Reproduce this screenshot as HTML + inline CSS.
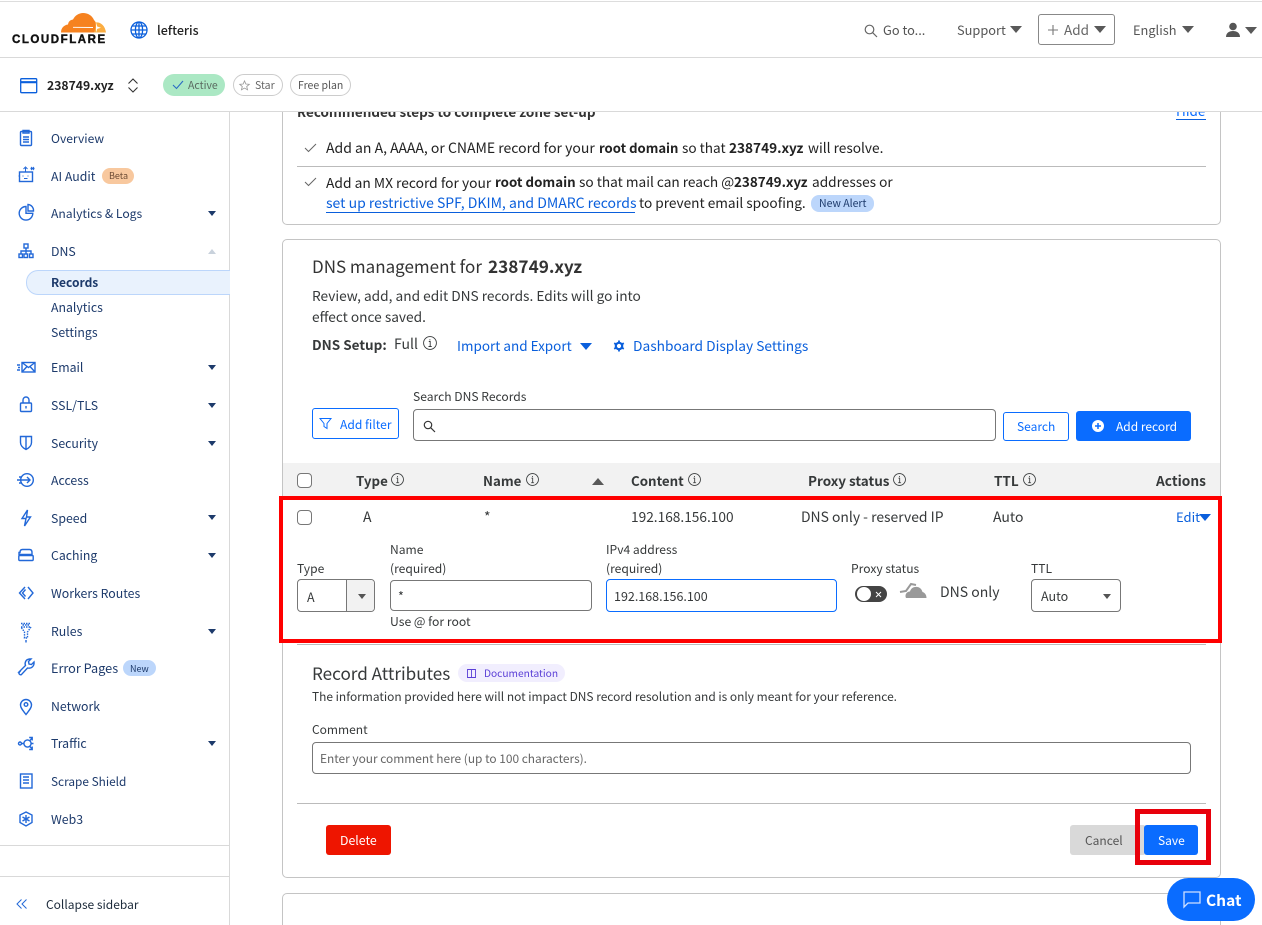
<!DOCTYPE html>
<html lang="en">
<head>
<meta charset="utf-8">
<title>DNS Records</title>
<style>
html,body{margin:0;padding:0;width:1262px;height:925px;overflow:hidden;background:#fff}
body{position:relative;font-family:"Noto Sans CJK JP","Liberation Sans",sans-serif;font-size:13px;color:#36393a}
.t{position:absolute;white-space:nowrap;line-height:20px;height:20px}
.b{position:absolute;box-sizing:border-box}
svg{position:absolute;overflow:visible}
b{font-weight:700}
.n{color:#1d3a6b;font-size:12.300px;left:51px}
.a{color:#0a5fdc}
.ar{position:absolute;width:0;height:0;border-left:4.5px solid transparent;border-right:4.5px solid transparent;border-top:5px solid #1d3a6b;left:208px}
.i{fill:none;stroke:#2268d8;stroke-width:1.4}
.dk{position:absolute;width:0;height:0;border-left:6px solid transparent;border-right:6px solid transparent;border-top:7px solid #595959}
.inf{fill:none;stroke:#36393a;stroke-width:.9}
</style>
</head>
<body>
<!-- top -->
<div class="b" style="left:0;top:1px;width:1262px;height:1px;background:#ddd"></div>
<div class="b" style="left:0;top:57px;width:1262px;height:1px;background:#d9d9d9"></div>

<svg style="left:0;top:0" width="120" height="50" viewBox="0 0 120 50">
<path d="M61 32.500C61 28 64 25 68 24.500C68.500 21.500 70 20 73 19.500C75 15.500 79 13 83 13C88 13 92 15.500 94 20C96 22 97 25 97 27L96 32.500Z" fill="#f6821f"/>
<path d="M94 32.500C95.500 28.500 96 25 95 22.500C100 21.500 105 25 106 32.500Z" fill="#fbad41"/>
<path d="M73 27.300l20 .2" stroke="#fff" stroke-width=".9"/>
<path d="M96 22.500l1.200 4 3.800 1.200-3.800 1.200-1.200 3.600" fill="#fff"/>
</svg>
<div class="t" style="left:12px;top:30px;font:700 11.500px/20px 'Liberation Sans',sans-serif;letter-spacing:1.550px;color:#111;-webkit-text-stroke:.4px #111">CLOUDFLARE</div>
<svg style="left:130px;top:21px" width="18" height="18" viewBox="0 0 18 18" fill="none" stroke="#0a5fdc" stroke-width="1.300">
<circle cx="9" cy="9" r="8"/><ellipse cx="9" cy="9" rx="3.600" ry="8"/><path d="M1 9h16M2 5h14M2 13h14M9 1v16"/>
</svg>
<div class="t" style="left:157px;top:20px;font-size:12.500px;font-weight:500;color:#222">lefteris</div>

<svg style="left:864px;top:24px" width="14" height="14" viewBox="0 0 14 14" fill="none" stroke="#666" stroke-width="1.200"><circle cx="5.500" cy="5.500" r="4.300"/><path d="M8.700 8.700l4.300 4.300"/></svg>
<div class="t" style="left:883px;top:20px;font-size:12.800px;color:#555">Go to...</div>
<div class="t" style="left:957px;top:20px;font-size:12.800px;color:#555">Support</div>
<div class="dk" style="left:1010px;top:26px"></div>
<div class="b" style="left:1038px;top:14px;width:77px;height:31px;border:1px solid #888;border-radius:3px"></div>
<svg style="left:1047px;top:24px" width="12" height="12" viewBox="0 0 12 12" stroke="#777" stroke-width="1.100"><path d="M6 1v10M1 6h10"/></svg>
<div class="t" style="left:1064px;top:19px;font-size:13.500px;color:#666">Add</div>
<div class="dk" style="left:1094px;top:26px"></div>
<div class="t" style="left:1133px;top:20px;font-size:12.800px;color:#555">English</div>
<div class="dk" style="left:1182px;top:26px"></div>
<svg style="left:1225px;top:22px" width="16" height="16" viewBox="0 0 16 16" fill="#555"><circle cx="8" cy="4.500" r="3.800"/><path d="M1 15c0-4 3-6 7-6s7 2 7 6z"/></svg>
<div class="dk" style="left:1245px;top:27px"></div>

<!-- content cards (under zone bar) -->
<div class="b" style="left:282px;top:90px;width:939px;height:135px;border:1px solid #c4c4c4;border-radius:5px"></div>
<div class="t" style="left:297px;top:101px;font-size:13.460px;font-weight:700;color:#333">Recommended steps to complete zone set-up</div>
<div class="t" style="left:1176px;top:100px;font-size:13.500px;color:#0a6cff">Hide</div>
<div class="b" style="left:1176px;top:119px;width:30px;height:1px;background:#0a5fdc"></div>

<!-- zone bar -->
<div class="b" style="left:0;top:58px;width:1262px;height:53px;background:#fff"></div>
<div class="b" style="left:0;top:111px;width:1262px;height:1px;background:#d9d9d9"></div>
<svg style="left:20px;top:78px" width="18" height="16" viewBox="0 0 18 16" fill="none" stroke="#0a5fdc" stroke-width="1.300"><rect x=".7" y=".7" width="16" height="14" rx="1"/><path d="M.7 4.200h16" stroke-width="2.200"/></svg>
<div class="t" style="left:47px;top:75px;font-size:12.200px;font-weight:700;color:#222">238749.xyz</div>
<svg style="left:127px;top:78px" width="12" height="15" viewBox="0 0 12 15" fill="none" stroke="#333" stroke-width="1.100"><path d="M1.500 5.500L6 1l4.500 4.500M1.500 9.500L6 14l4.500-4.500"/></svg>
<div class="b" style="left:163px;top:74px;width:62px;height:22px;background:#abe8c4;border-radius:11px"></div>
<svg style="left:172px;top:80px" width="12" height="10" viewBox="0 0 12 10" fill="none" stroke="#2a6bc4" stroke-width="1.100"><path d="M1 5l3.500 3.500L11 1"/></svg>
<div class="t" style="left:188px;top:76px;font-size:10.500px;color:#5a6a60">Active</div>
<div class="b" style="left:233px;top:74px;width:50px;height:22px;border:1px solid #ccc;border-radius:11px"></div>
<svg style="left:239px;top:80px" width="11" height="11" viewBox="0 0 12 12" fill="none" stroke="#999" stroke-width=".9"><path d="M6 1l1.500 3.400 3.700.3-2.800 2.400.9 3.600L6 8.800l-3.300 1.900.9-3.600L.8 4.700l3.700-.3z"/></svg>
<div class="t" style="left:255px;top:76px;font-size:10.500px;color:#666">Star</div>
<div class="b" style="left:290px;top:74px;width:61px;height:22px;border:1px solid #ccc;border-radius:11px"></div>
<div class="t" style="left:298px;top:76px;font-size:10.500px;color:#555">Free plan</div>

<!-- sidebar -->
<div class="b" style="left:229px;top:112px;width:1px;height:813px;background:#d9d9d9"></div>
<div class="b" style="left:26px;top:270px;width:204px;height:25px;background:#e9f2fd;border:1px solid #bcd6fb;border-right:0;border-radius:12px 0 0 12px"></div>
<div class="b" style="left:0;top:845px;width:229px;height:1px;background:#d9d9d9"></div>
<div class="b" style="left:0;top:876px;width:229px;height:1px;background:#d9d9d9"></div>

<div class="t n" style="top:129px;font-size:12.100px">Overview</div>
<div class="t n" style="top:166px">AI Audit</div>
<div class="b" style="left:102px;top:168px;width:32px;height:16px;background:#f8c89e;border-radius:8px"></div>
<div class="t" style="left:109px;top:166px;font-size:9px;color:#6b4a33">Beta</div>
<div class="t n" style="top:204px;font-size:12.150px">Analytics &amp; Logs</div>
<div class="t n" style="top:241px">DNS</div>
<div class="t n" style="top:273px;font-weight:700;color:#1d3a6b;font-size:12px">Records</div>
<div class="t n" style="top:297px">Analytics</div>
<div class="t n" style="top:322px">Settings</div>
<div class="t n" style="top:357px">Email</div>
<div class="t n" style="top:395px">SSL/TLS</div>
<div class="t n" style="top:433px">Security</div>
<div class="t n" style="top:470px">Access</div>
<div class="t n" style="top:508px">Speed</div>
<div class="t n" style="top:545px">Caching</div>
<div class="t n" style="top:583px">Workers Routes</div>
<div class="t n" style="top:621px">Rules</div>
<div class="t n" style="top:658px;font-size:12.700px">Error Pages</div>
<div class="b" style="left:123px;top:660px;width:33px;height:16px;background:#bcd6fb;border-radius:8px"></div>
<div class="t" style="left:130px;top:659px;font-size:9px;color:#1d3a6b">New</div>
<div class="t n" style="top:696px">Network</div>
<div class="t n" style="top:733px">Traffic</div>
<div class="t n" style="top:772px;font-size:11.850px">Scrape Shield</div>
<div class="t n" style="top:809px">Web3</div>
<div class="t" style="left:46px;top:895px;font-size:12px;color:#1c2a3a">Collapse sidebar</div>

<div class="ar" style="top:211px"></div>
<div class="ar" style="top:249px;border-top:0;border-bottom:5px solid #c9d2dc"></div>
<div class="ar" style="top:365px"></div>
<div class="ar" style="top:403px"></div>
<div class="ar" style="top:441px"></div>
<div class="ar" style="top:515px"></div>
<div class="ar" style="top:553px"></div>
<div class="ar" style="top:629px"></div>
<div class="ar" style="top:741px"></div>

<!-- sidebar icons -->
<svg style="left:0;top:0" width="60" height="925" viewBox="0 0 60 925">
<g class="i">
<!-- overview -->
<rect x="20.500" y="131.500" width="11" height="14" rx="1"/><path d="M23 130.500h6v2.500h-6zM23 137h6M23 139.500h6M23 142h6"/>
<!-- ai audit -->
<rect x="19.500" y="172" width="13" height="9.500"/><path d="M25.500 172v-4M23.500 169l2-2 2 2M23 175.500v1M28 175.500v1M24 178.500h3.500M19.500 176h-1M31 167l3 3M34 167l-3 3M30.500 168.500h4" stroke-width="1"/>
<!-- analytics -->
<path d="M26 206.500a6.800 6.800 0 1 0 6.800 6.800h-6.800z"/><path d="M28 204.500a6 6 0 0 1 5.500 6.500H28z"/>
<!-- dns -->
<rect x="24" y="244" width="4" height="4"/><rect x="19" y="254" width="3.500" height="3.500"/><rect x="24" y="254" width="3.500" height="3.500"/><rect x="29.500" y="254" width="3.500" height="3.500"/><path d="M26 248v6M21 254v-3h10v3"/>
<!-- email -->
<rect x="22" y="362.500" width="13" height="9.500"/><path d="M22 362.500l6.500 5 6.500-5M22 372l5-5.500M35 372l-5-5.500M17 365h3M18 367.500h2M17 370h3"/>
<!-- ssl -->
<rect x="20.500" y="403" width="11" height="8.500" rx="1"/><path d="M23 403v-3a3 3 0 0 1 6 0v3M26 406v2.500"/>
<!-- security -->
<path d="M20.500 436.500h11v6c0 3-2.500 5.500-5.500 7-3-1.500-5.500-4-5.500-7zM26 436.500v13"/>
<!-- access -->
<circle cx="27" cy="480" r="6.300"/><path d="M17 480h13M27 477l3 3-3 3M19 477h3M19 483h3"/>
<!-- speed -->
<path d="M27.500 510l-5.500 8.500h4l-1.500 7.500 6-9h-4z"/>
<!-- caching -->
<path d="M20 552.500c0-2 1-3 2.500-3h7c1.500 0 2.500 1 2.500 3v2H19v-2z"/><rect x="18.800" y="555.500" width="14.400" height="5" rx="1"/>
<!-- workers -->
<path d="M25 587l-5.500 6 5.500 6M28 587l5 6-5 6M25.500 589.500l-3 3.500 3 3.500"/>
<!-- rules -->
<path d="M21 627h10l-3.500 5v6h-3v-6zM21 623.500h10M22.500 625h7" stroke-dasharray="1.500 1"/><path d="M26 640v2.500"/>
<!-- error -->
<path d="M19 672l6.500-6.500c-1-2.500 0-6 4-6.500l1.500 0-2.500 2.500.5 2.500 2.500.5 2.500-2.500c.5 4-2.500 7-6.500 6l-6 6.500c-1.500 1-3.500-1-2-2.500z"/>
<!-- network -->
<path d="M26 714.500c-3-4-5.500-6.500-5.500-9.500a5.500 5.500 0 0 1 11 0c0 3-2.500 5.500-5.500 9.500z"/><circle cx="26" cy="704.500" r="1.800"/>
<!-- traffic -->
<circle cx="27.500" cy="743.500" r="3.600"/><circle cx="20" cy="743.500" r="1.500"/><path d="M21.500 743.500H24M30 740.500l2-2.500M29.200 737.500h3v3M30 746.500l2 2.500M29.200 749.500h3v-3M31 743.500h2.500"/>
<!-- scrape -->
<rect x="20.500" y="774" width="11.500" height="14"/><path d="M23 777h6M23 780h6M23 783h6"/>
<!-- web3 -->
<path d="M26 812l6 3v7.500l-6 3.500-6-3.500V815z"/><path d="M26 815v8M22.500 817l7 4M29.500 817l-7 4"/>
<!-- collapse -->
<path d="M21.500 899.500l-4.500 4.500 4.500 4.500M26.500 899.500L22 904l4.500 4.500" stroke-width="1"/>
</g>
</svg>

<!-- first card rows -->
<svg style="left:304px;top:143px" width="14" height="10" viewBox="0 0 14 10" fill="none" stroke="#666" stroke-width="1"><path d="M1 5l3.500 3.500L12 1"/></svg>
<div class="t" style="left:326px;top:138px;font-size:14px;color:#222">Add an A, AAAA, or CNAME record for your</div>
<div class="t" style="left:599px;top:138px;font-size:13.100px;font-weight:700;color:#222">root domain</div>
<div class="t" style="left:682px;top:137px;font-size:13.600px;color:#222">so that</div>
<div class="t" style="left:729px;top:137px;font-size:13.600px;font-weight:700;color:#222">238749.xyz</div>
<div class="t" style="left:808px;top:137px;font-size:13.700px;color:#222">will resolve.</div>
<div class="b" style="left:297px;top:166px;width:909px;height:1px;background:#bbb"></div>
<svg style="left:304px;top:177px" width="14" height="10" viewBox="0 0 14 10" fill="none" stroke="#666" stroke-width="1"><path d="M1 5l3.500 3.500L12 1"/></svg>
<div class="t" style="left:326px;top:172px;font-size:13.800px;color:#222">Add an MX record for your</div>
<div class="t" style="left:495px;top:172px;font-size:13.300px;font-weight:700;color:#222">root domain</div>
<div class="t" style="left:579px;top:171px;font-size:13.660px;color:#222">so that mail can reach @</div>
<div class="t" style="left:734px;top:171px;font-size:13.450px;font-weight:700;color:#222">238749.xyz</div>
<div class="t" style="left:812px;top:171px;font-size:13.660px;color:#222">addresses or</div>
<div class="t a" style="left:326px;top:193px;font-size:14px">set up restrictive SPF, DKIM, and DMARC records</div>
<div class="t" style="left:639px;top:192px;font-size:13.670px;color:#222">to prevent email spoofing.</div>
<div class="b" style="left:326px;top:212px;width:309px;height:1px;background:#0a5fdc"></div>
<div class="b" style="left:811px;top:195px;width:63px;height:17px;background:#bcd6fb;border-radius:8px"></div>
<div class="t" style="left:819px;top:194px;font-size:10.500px;color:#1d3a6b">New Alert</div>

<!-- main card -->
<div class="b" style="left:282px;top:239px;width:939px;height:639px;border:1px solid #c4c4c4;border-radius:5px"></div>
<div class="t" style="left:312px;top:256px;font-size:17px;color:#333">DNS management for</div>
<div class="t" style="left:488px;top:256px;font-size:17.200px;font-weight:700;color:#333">238749.xyz</div>
<div class="t" style="left:312px;top:285px;font-size:13.700px;color:#36393a">Review, add, and edit DNS records. Edits will go into</div>
<div class="t" style="left:312px;top:306px;font-size:13.700px;color:#36393a">effect once saved.</div>
<div class="t" style="left:312px;top:334px;font-size:13.500px;font-weight:700;color:#36393a">DNS Setup:</div>
<div class="t" style="left:394px;top:334px;font-size:14px;color:#36393a">Full</div>
<svg class="inf" style="left:423px;top:336px" width="14" height="14" viewBox="0 0 14 14"><circle cx="7" cy="7" r="6.400"/><path d="M5.800 5.500H7.200V10.500M5.500 10.500h3.200M6.900 3.200v1.200"/></svg>
<div class="t a" style="left:457px;top:335px;font-size:13.500px">Import and Export</div>
<div class="dk" style="left:580px;top:343px;border-top-color:#0a5fdc"></div>
<svg style="left:613px;top:340px" width="12" height="12" viewBox="0 0 12 12"><circle cx="6" cy="6" r="3.200" fill="none" stroke="#0a5fdc" stroke-width="2.200"/><path d="M6 .5v2M6 9.500v2M1.200 3.200l1.700 1M9.100 7.800l1.700 1M1.200 8.800l1.700-1M9.100 4.200l1.700-1" stroke="#0a5fdc" stroke-width="1.800"/></svg>
<div class="t a" style="left:633px;top:335px;font-size:13.750px">Dashboard Display Settings</div>

<div class="t" style="left:413px;top:387px;font-size:12.100px;color:#36393a">Search DNS Records</div>
<div class="b" style="left:312px;top:408px;width:87px;height:31px;border:1px solid #0a6cff;border-radius:3px"></div>
<svg style="left:319px;top:417px" width="13" height="13" viewBox="0 0 13 13" fill="none" stroke="#0a6cff" stroke-width="1"><path d="M1 1.500h11L8 6.500v5l-3-2V6.500z"/></svg>
<div class="t" style="left:340px;top:415px;font-size:12.100px;color:#0a6cff">Add filter</div>
<div class="b" style="left:413px;top:409px;width:583px;height:32px;border:1px solid #777;border-radius:4px"></div>
<svg style="left:423px;top:420px" width="13" height="13" viewBox="0 0 13 13" fill="none" stroke="#333" stroke-width="1.200"><circle cx="5" cy="5" r="3.700"/><path d="M7.800 7.800L12 12"/></svg>
<div class="b" style="left:1003px;top:412px;width:66px;height:29px;border:1px solid #0a6cff;border-radius:3px"></div>
<div class="t" style="left:1017px;top:417px;font-size:12px;color:#0a6cff">Search</div>
<div class="b" style="left:1076px;top:411px;width:115px;height:30px;background:#0a6cff;border-radius:3px"></div>
<svg style="left:1092px;top:420px" width="12" height="12" viewBox="0 0 12 12"><circle cx="6" cy="6" r="6" fill="#fff"/><path d="M6 3v6M3 6h6" stroke="#0a6cff" stroke-width="1.500"/></svg>
<div class="t" style="left:1116px;top:417px;font-size:12px;color:#fff">Add record</div>

<!-- table -->
<div class="b" style="left:283px;top:463px;width:937px;height:34px;background:#f2f2f2"></div>
<div class="b" style="left:297px;top:473px;width:15px;height:15px;border:1px solid #777;border-radius:4px;background:#fff"></div>
<div class="t" style="left:356px;top:471px;font-size:13.300px;font-weight:700;color:#36393a">Type</div>
<svg class="inf" style="left:391px;top:473px" width="13" height="13" viewBox="0 0 14 14"><circle cx="7" cy="7" r="6.400"/><path d="M5.800 5.500H7.200V10.500M5.500 10.500h3.200M6.900 3.200v1.200"/></svg>
<div class="t" style="left:483px;top:471px;font-size:13.300px;font-weight:700;color:#36393a">Name</div>
<svg class="inf" style="left:526px;top:473px" width="13" height="13" viewBox="0 0 14 14"><circle cx="7" cy="7" r="6.400"/><path d="M5.800 5.500H7.200V10.500M5.500 10.500h3.200M6.900 3.200v1.200"/></svg>
<div class="b" style="left:592px;top:478px;width:0;height:0;border-left:6px solid transparent;border-right:6px solid transparent;border-bottom:7px solid #595959"></div>
<div class="t" style="left:631px;top:471px;font-size:13.300px;font-weight:700;color:#36393a">Content</div>
<svg class="inf" style="left:688px;top:473px" width="13" height="13" viewBox="0 0 14 14"><circle cx="7" cy="7" r="6.400"/><path d="M5.800 5.500H7.200V10.500M5.500 10.500h3.200M6.900 3.200v1.200"/></svg>
<div class="t" style="left:808px;top:470px;font-size:13.500px;font-weight:700;color:#36393a">Proxy status</div>
<svg class="inf" style="left:893px;top:473px" width="13" height="13" viewBox="0 0 14 14"><circle cx="7" cy="7" r="6.400"/><path d="M5.800 5.500H7.200V10.500M5.500 10.500h3.200M6.900 3.200v1.200"/></svg>
<div class="t" style="left:994px;top:470px;font-size:13.500px;font-weight:700;color:#36393a">TTL</div>
<svg class="inf" style="left:1023px;top:473px" width="13" height="13" viewBox="0 0 14 14"><circle cx="7" cy="7" r="6.400"/><path d="M5.800 5.500H7.200V10.500M5.500 10.500h3.200M6.900 3.200v1.200"/></svg>
<div class="t" style="left:1156px;top:470px;font-size:13.700px;font-weight:700;color:#36393a">Actions</div>

<div class="b" style="left:297px;top:510px;width:15px;height:15px;border:1px solid #777;border-radius:4px"></div>
<div class="t" style="left:363px;top:507px;font-size:14px">A</div>
<div class="t" style="left:484px;top:507px;font-size:14px">*</div>
<div class="t" style="left:631px;top:506px;font-size:13.700px">192.168.156.100</div>
<div class="t" style="left:801px;top:507px;font-size:13.900px">DNS only - reserved IP</div>
<div class="t" style="left:993px;top:507px;font-size:14px">Auto</div>
<div class="t" style="left:1176px;top:507px;font-size:13px;color:#0a5fdc">Edit</div>
<div class="dk" style="left:1199px;top:514px;border-top-color:#0a5fdc"></div>

<div class="t" style="left:297px;top:559px;font-size:12.100px">Type</div>
<div class="t" style="left:390px;top:540px;font-size:12.100px">Name</div>
<div class="t" style="left:390px;top:559px;font-size:12.100px">(required)</div>
<div class="t" style="left:606px;top:540px;font-size:12.100px">IPv4 address</div>
<div class="t" style="left:606px;top:559px;font-size:12.100px">(required)</div>
<div class="t" style="left:851px;top:559px;font-size:12.100px">Proxy status</div>
<div class="t" style="left:1031px;top:559px;font-size:12.100px">TTL</div>

<div class="b" style="left:297px;top:579px;width:78px;height:33px;border:1px solid #777;border-radius:4px;overflow:hidden"><div class="b" style="left:48px;top:0;width:30px;height:33px;background:#f2f2f2;border-left:1px solid #777"></div></div>
<div class="t" style="left:307px;top:587px;font-size:12.500px">A</div>
<div class="b" style="left:358px;top:594px;width:0;height:0;border-left:4px solid transparent;border-right:4px solid transparent;border-top:5px solid #555"></div>
<div class="b" style="left:390px;top:580px;width:202px;height:31px;border:1px solid #777;border-radius:4px"></div>
<div class="t" style="left:398px;top:586px;font-size:12.500px">*</div>
<div class="t" style="left:390px;top:611px;font-size:12.200px">Use @ for root</div>
<div class="b" style="left:606px;top:579px;width:231px;height:33px;border:1px solid #0a6cff;border-radius:4px"></div>
<div class="t" style="left:614px;top:586px;font-size:12.500px">192.168.156.100</div>

<div class="b" style="left:855px;top:586px;width:32px;height:16px;background:#444;border-radius:8px"></div>
<div class="b" style="left:857px;top:587px;width:14px;height:14px;background:#fff;border-radius:7px"></div>
<svg style="left:875px;top:591px" width="7" height="7" viewBox="0 0 7 7" stroke="#fff" stroke-width="1"><path d="M1 1l5 5M6 1L1 6"/></svg>
<svg style="left:899px;top:581px" width="28" height="18" viewBox="0 0 28 18"><path d="M7 17c-1.500-3 .5-6.500 4-6.500 1-3.500 4-5 7.500-4.500 3 .5 4.500 3 5 5 2 .5 4 2.500 4 6z" fill="#999"/><path d="M1 11l6-1 5-7 5 1" fill="none" stroke="#999" stroke-width="2"/></svg>
<div class="t" style="left:940px;top:582px;font-size:14px">DNS only</div>

<div class="b" style="left:1031px;top:579px;width:90px;height:33px;border:1px solid #777;border-radius:4px"></div>
<div class="t" style="left:1041px;top:586px;font-size:12.500px">Auto</div>
<div class="b" style="left:1103px;top:594px;width:0;height:0;border-left:4px solid transparent;border-right:4px solid transparent;border-top:5px solid #555"></div>

<div class="b" style="left:297px;top:644px;width:909px;height:1px;background:#bbb"></div>

<div class="t" style="left:312px;top:663px;font-size:17.100px;color:#36393a">Record Attributes</div>
<div class="b" style="left:458px;top:664px;width:107px;height:18px;background:#f1eefe;border-radius:9px"></div>
<svg style="left:467px;top:669px" width="9" height="9" viewBox="0 0 9 9" fill="none" stroke="#5a3fd6" stroke-width=".9"><path d="M.5 .5h4v8h-4zM4.500 .5h4v8h-4z"/></svg>
<div class="t" style="left:484px;top:663px;font-size:10.200px;color:#5a3fd6">Documentation</div>
<div class="t" style="left:312px;top:687px;font-size:11.930px">The information provided here will not impact DNS record resolution and is only meant for your reference.</div>
<div class="t" style="left:312px;top:720px;font-size:12px">Comment</div>
<div class="b" style="left:312px;top:742px;width:879px;height:32px;border:1px solid #777;border-radius:4px"></div>
<div class="t" style="left:320px;top:749px;font-size:11.900px;color:#666">Enter your comment here (up to 100 characters).</div>
<div class="b" style="left:297px;top:803px;width:909px;height:1px;background:#bbb"></div>

<div class="b" style="left:326px;top:825px;width:65px;height:30px;background:#ee1500;border-radius:3px"></div>
<div class="t" style="left:340px;top:830px;font-size:12.300px;color:#fff">Delete</div>
<div class="b" style="left:1070px;top:825px;width:76px;height:30px;background:#d9d9d9;border-radius:3px"></div>
<div class="t" style="left:1085px;top:831px;font-size:12px;color:#555">Cancel</div>
<div class="b" style="left:1144px;top:825px;width:54px;height:30px;background:#0a6cff;border-radius:3px"></div>
<div class="t" style="left:1158px;top:831px;font-size:12px;color:#fff">Save</div>

<div class="b" style="left:282px;top:893px;width:939px;height:40px;border:1px solid #c4c4c4;border-radius:5px"></div>

<!-- red annotations -->
<div class="b" style="left:279px;top:496px;width:943px;height:147px;border:4px solid #f00"></div>
<div class="b" style="left:1135px;top:809px;width:76px;height:56px;border:5px solid #e8000b"></div>

<!-- chat -->
<div class="b" style="left:1167px;top:878px;width:88px;height:43px;background:#0a6cff;border-radius:22px"></div>
<svg style="left:1183px;top:891px" width="18" height="17" viewBox="0 0 18 17" fill="none" stroke="#cfe0ff" stroke-width="1.300"><path d="M1 1h16v11H5l-4 4z"/></svg>
<div class="t" style="left:1206px;top:890px;font-size:15.500px;font-weight:700;color:#fff">Chat</div>
</body>
</html>
